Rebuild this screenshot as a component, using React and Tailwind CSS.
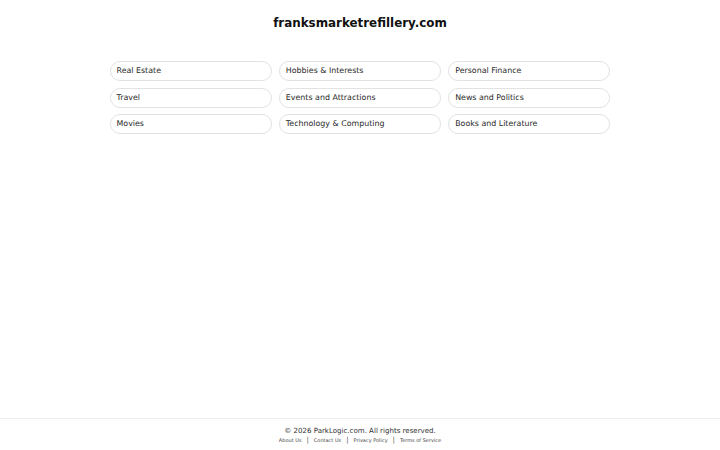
const topics = [
  'Real Estate',
  'Hobbies & Interests',
  'Personal Finance',
  'Travel',
  'Events and Attractions',
  'News and Politics',
  'Movies',
  'Technology & Computing',
  'Books and Literature',
];

const links = ['About Us', 'Contact Us', 'Privacy Policy', 'Terms of Service'];

export default function App() {
  return (
    <div className="flex min-h-[450px] flex-col bg-white text-[#222] font-['DejaVu_Sans',sans-serif]">
      <main className="flex-1">
        <h1 className="pt-[14px] text-center text-[11.9px] font-bold leading-[18px] text-[#111]">
          franksmarketrefillery.com
        </h1>

        <div className="mx-auto mt-[29px] grid w-[501px] grid-cols-3 gap-x-[7px] gap-y-[6.5px]">
          {topics.map((t) => (
            <a
              key={t}
              href="#"
              className="flex h-[20px] items-center rounded-full border border-[#e2e2e2] px-[6px] text-[7.9px] text-[#2a2a2a]"
            >
              {t}
            </a>
          ))}
        </div>
      </main>

      {/* Footer */}
      <footer className="h-[32px] border-t border-[#ececec] pt-[7px] text-center">
        <p className="text-[7.05px] leading-[10px] text-[#333]">© 2026 ParkLogic.com. All rights reserved.</p>
        <div className="flex items-center justify-center gap-[5px] text-[5px] leading-[8px] text-[#444]">
          {links.map((l, i) => (
            <span key={l} className="flex items-center gap-[5px]">
              {i > 0 && <span className="text-[7px] text-[#555]">|</span>}
              <a href="#">{l}</a>
            </span>
          ))}
        </div>
      </footer>
    </div>
  );
}
